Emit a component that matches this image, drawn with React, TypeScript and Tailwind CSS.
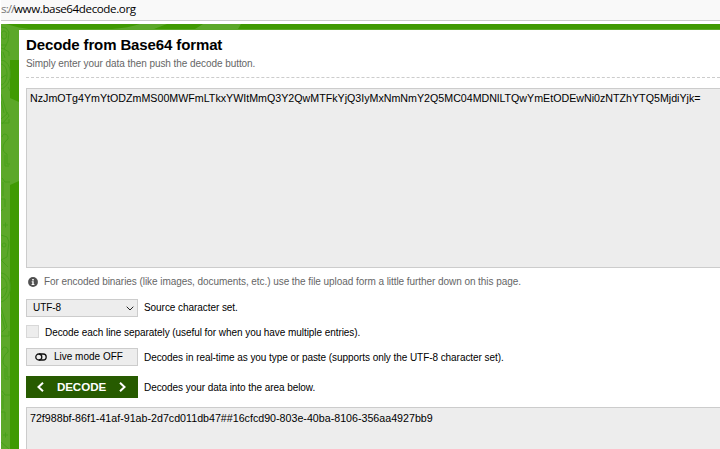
import React from "react";

const line = "whitespace-nowrap leading-[14px]";
const data = "whitespace-nowrap text-[10.68px] leading-[14px] tracking-normal";

function Pattern() {
  return (
    <svg className="block h-[425px] w-[18px] shrink-0" viewBox="1 24 18 425" fill="none" stroke="#48a01a" strokeWidth="1">
      <path d="M1 24h18v425H1z" fill="#5ca829" stroke="none" />
      <path d="M6 24h13v3.500zM10 60h9v42l-9-4zM10 185l9-4v268h-9z" fill="#409a02" stroke="none" />
      <path d="M1 27l5 1 3 4-1 9-4 8-3-1M2 35a2.5 2.5 0 1 0 4 0 2.5 2.5 0 1 0-4 0M1 45l6 0M4 49l5 3v4M3 52l2 6M1 51l1 8" />
      <path d="M1 60c12 1 13 25 0 29M1 64c8 1 8 19 0 21M1 78l5-3M8 87l2 4M1 94l6 20-6 5M1 101l3 12M7 112l2 4-7 8" />
      <path d="M1 123h8v-4M2 137c1-5 7-3 6 2M8 139c-6 4-7 13-1 15v10h3M5 155v11h4M2 178l3 4h5M3 182v14M1 199h4v8M1 211l2-2" />
      <path d="M3 225h5M5.500 222.500v5M1 235l6 2 2 5-2 15-6 3M2 245a2 2 0 1 0 4 0 2 2 0 1 0-4 0M1 260l7 7" />
      <path d="M1 273c12 1 13 25 0 29M1 277c8 1 8 19 0 21M1 290l5-3M1 307l6 20-5 5M1 314l4 15M1 336h8v-5M2 350c1-5 7-3 6 2M8 352c-6 4-7 13-1 15v10h3M5 368v11h4M2 391l3 4h5M3 395v14M1 412h4v8M3 435h5M5.500 432.500v5M1 442l8 7" />
    </svg>
  );
}

export default function App() {
  return (
    <div className="flex h-[449px] w-[720px] flex-col overflow-hidden bg-white font-['Liberation_Sans',Arial,sans-serif] text-[10px] tracking-[-0.06px] text-black">
      <div className="ml-px h-[21px] shrink-0 whitespace-nowrap border-b border-[#ccc] bg-[#f9f9f9] font-['Open_Sans',sans-serif] text-[11.6px] leading-[17px] tracking-[-0.4px]">
        <span className="inline-block w-[13px] tracking-[-0.9px] text-[#777]">s://</span>www.base64decode.org
      </div>
      <div className="mt-[3px] ml-px flex flex-1">
        <Pattern />
        <div className="flex min-w-0 flex-1 flex-col">
          <div className="h-[6px] shrink-0 border-b border-[#5ca829] bg-[#409a02]">
            <svg className="block h-[5px] w-[240px]" viewBox="19 24 240 5" fill="#5ca829">
              <path d="M19 27.500L29 29H19zM140 24h27l-13 5h-42q16-1 28-5zM203 24h38l-3 5h-43z" />
            </svg>
          </div>
          <main className="flex flex-1 flex-col pl-[7px]">
            <h1 className="mt-[6px] whitespace-nowrap text-[15px] leading-[17px] font-bold tracking-[-0.12px]">Decode from Base64 format</h1>
            <p className={`mt-[4px] text-[#666] ${line}`}>Simply enter your data then push the decode button.</p>
            <div className="mt-[6px] border-t border-dashed border-[#ccc]" />
            <div className="mt-[10px] h-[180px] shrink-0 border border-r-0 border-[#ccc] bg-[#ededed] pt-[2px] pl-[3px]">
              <p className={data}>NzJmOTg4YmYtODZmMS00MWFmLTkxYWItMmQ3Y2QwMTFkYjQ3IyMxNmNmY2Q5MC04MDNlLTQwYmEtODEwNi0zNTZhYTQ5MjdiYjk=</p>
            </div>
            <div className="mt-[7px] flex h-[14px] items-center text-[#666]">
              <svg className="ml-[2px] size-[10px]" viewBox="0 0 10 10"><circle cx="5" cy="5" r="4.900" fill="#505050" /><path d="M4.200 2h1.600v1.400H4.200zM3.700 4.200h2v2.800h.7v1H3.600V7h.7V5.200h-.6z" fill="#fff" /></svg>
              <p className={`ml-[6px] ${line}`}>For encoded binaries (like images, documents, etc.) use the file upload form a little further down on this page.</p>
            </div>
            <div className="mt-[10px] flex h-[18px] items-center">
              <div className="flex h-full w-[112px] items-center justify-between border border-[#ccc] bg-[#ededed] pr-[3px] pl-[6px]">
                <span className="leading-[14px]">UTF-8</span>
                <svg className="h-[5px] w-[8px]" viewBox="0 0 8 5" fill="none" stroke="#222"><path d="M.7.7L4 4 7.300.7" /></svg>
              </div>
              <p className={`ml-[6px] ${line}`}>Source character set.</p>
            </div>
            <div className="mt-[8px] flex h-[13px] items-center">
              <div className="size-[13px] border border-[#d8d8d8] bg-[#ededed]" />
              <p className={`mt-[2px] ml-[6px] ${line}`}>Decode each line separately (useful for when you have multiple entries).</p>
            </div>
            <div className="mt-[10px] flex h-[18px] items-center">
              <div className="flex h-full w-[112px] items-center border border-[#ccc] bg-[#ededed] pl-[8px]">
                <svg className="h-[8px] w-[12px]" viewBox="0 0 12 8" fill="none" stroke="#111" strokeWidth="1.300"><rect x=".8" y="1" width="10.400" height="6" rx="3" /><path d="M4 1a3 3 0 0 1 2.800 3A3 3 0 0 1 4 7" /></svg>
                <span className="ml-[7px] whitespace-nowrap leading-[14px] tracking-normal">Live mode OFF</span>
              </div>
              <p className={`mt-[2px] ml-[6px] ${line}`}>Decodes in real-time as you type or paste (supports only the UTF-8 character set).</p>
            </div>
            <div className="mt-[10px] flex h-[22px] items-center">
              <div className="flex h-full w-[112px] items-center justify-between bg-[#275b00] pr-[12px] pl-[11px] text-[11.6px] font-bold text-white">
                <svg className="h-[10px] w-[7px]" viewBox="0 0 7 10" fill="none" stroke="white" strokeWidth="2"><path d="M6 .8L1.500 5 6 9.200" /></svg>
                <span className="leading-[14px]">DECODE</span>
                <svg className="h-[10px] w-[7px]" viewBox="0 0 7 10" fill="none" stroke="white" strokeWidth="2"><path d="M1 .8L5.500 5 1 9.200" /></svg>
              </div>
              <p className={`mt-[2px] ml-[6px] ${line}`}>Decodes your data into the area below.</p>
            </div>
            <div className="mt-[9px] flex-1 border-t border-l border-[#ccc] bg-[#ededed] pt-[3px] pl-[3px]">
              <p className={data}>72f988bf-86f1-41af-91ab-2d7cd011db47##16cfcd90-803e-40ba-8106-356aa4927bb9</p>
            </div>
          </main>
        </div>
      </div>
    </div>
  );
}
